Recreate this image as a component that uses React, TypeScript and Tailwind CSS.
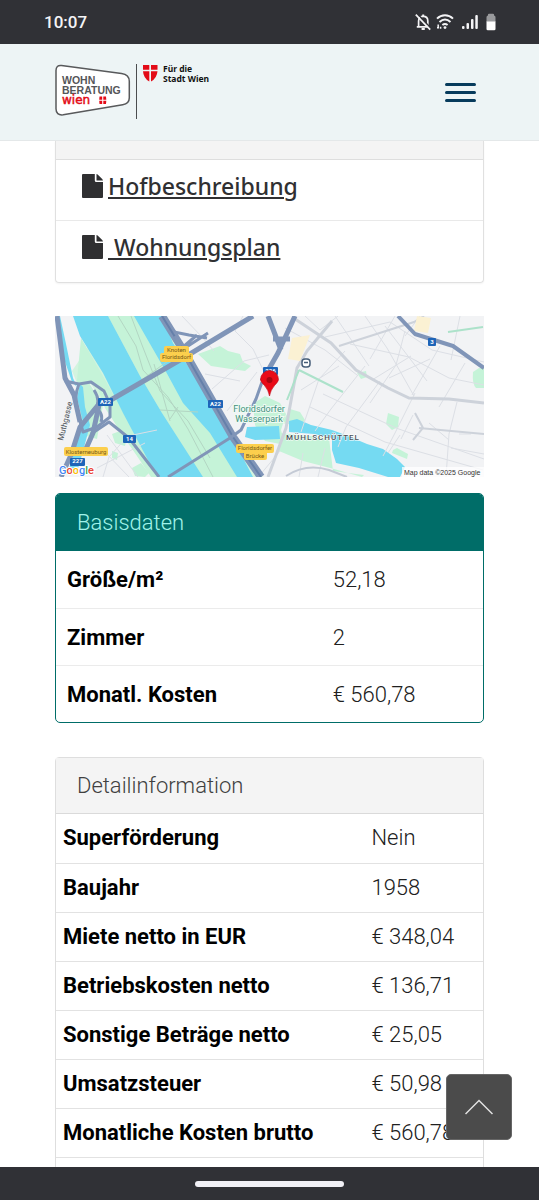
import React from 'react';

interface Row {
    label: string;
    value: string;
}

const basicRows: Row[] = [
    { label: 'Größe/m²', value: '52,18' },
    { label: 'Zimmer', value: '2' },
    { label: 'Monatl. Kosten', value: '€ 560,78' },
];

const detailRows: Row[] = [
    { label: 'Superförderung', value: 'Nein' },
    { label: 'Baujahr', value: '1958' },
    { label: 'Miete netto in EUR', value: '€ 348,04' },
    { label: 'Betriebskosten netto', value: '€ 136,71' },
    { label: 'Sonstige Beträge netto', value: '€ 25,05' },
    { label: 'Umsatzsteuer', value: '€ 50,98' },
    { label: 'Monatliche Kosten brutto', value: '€ 560,78' },
];

const StatusBar: React.FC = () => (
    <div className="h-11 shrink-0 bg-[#303136] text-[#f4f4f6] flex items-center justify-between pl-11 pr-[43px]">
        <span className="text-[17px] leading-6 font-medium">10:07</span>
        <div className="flex items-center">
            <svg className="w-4 h-[18px]" viewBox="0 0 16 18" fill="none" stroke="currentColor" strokeWidth="1.7">
                <path d="M3.6 13.5V8c0-2.8 1.9-4.600 4.600-4.600s4.600 1.800 4.600 4.600v5.500M1.800 13.800h11.600" />
                <path d="M8.200 1.400v2M6.600 16h3.200" strokeWidth="2" />
                <path d="M2.300 .8l14 15" stroke="#303136" strokeWidth="1.6" />
                <path d="M.8 1.600l14.400 15" />
            </svg>
            <svg className="w-[18px] h-[18px] ml-[5px]" viewBox="0 0 18 18" fill="none" stroke="currentColor" strokeWidth="2">
                <path d="M1 5.600c4.600-4.400 11.400-4.400 16 0M3.500 9c3.400-3 7.600-3 11 0M6.400 12c1.700-1.300 3.500-1.300 5.200 0" />
                <circle cx="9" cy="14.600" r="1.400" fill="currentColor" stroke="none" />
                <path d="M2.200 11.400v2.600M1 14.800h2M4.600 13.800v2" strokeWidth="1.5" />
            </svg>
            <svg className="w-4 h-[18px] ml-2" viewBox="0 0 16 18" fill="currentColor">
                <rect x="0" y="13" width="2.500" height="3" rx="1" />
                <rect x="4.500" y="10" width="2.500" height="6" rx="1" />
                <rect x="9" y="6" width="2.500" height="10" rx="1" />
                <rect x="13.300" y="2" width="2.500" height="14" rx="1" />
            </svg>
            <svg className="w-[10px] h-[18px] ml-2" viewBox="0 0 10 18">
                <path d="M.5 4.200Q.5 2.600 2 2.600V1.500Q2 .8 3 .8h4q1 0 1 .7v1.100q1.500 0 1.500 1.600V9H.5z" fill="#98999c" />
                <path d="M.5 8.500h9V16q0 1.300-1.300 1.300H1.800Q.5 17.300 .5 16z" fill="#fff" />
            </svg>
        </div>
    </div>
);

const BrandLogo: React.FC = () => (
    <svg className="w-40 h-14" viewBox="0 0 160 56" role="img" aria-label="Wohnberatung Wien">
        <path
            d="M6.500 2.500l60 7.900q7.800 1.100 7.800 7.800v16.600q0 5.900-6.600 6.900L8.200 51.800q-7.200 .8-7.200-6V7.500q0-5.600 5.500-5z"
            fill="#fff"
            stroke="#58595b"
            strokeWidth="1.500"
        />
        <g fontFamily="'Liberation Sans', Arial, sans-serif" fontWeight="700" fontSize="10.500" fill="#555658">
            <text x="7" y="21">WOHN</text>
            <text x="7" y="31">BERATUNG</text>
        </g>
        <text x="7" y="41" fontFamily="'DejaVu Sans', sans-serif" fontSize="12" fill="#e30b17" stroke="#e30b17" strokeWidth=".5">wien</text>
        <path d="M44.500 33.500h2.700v3.200h-3zM48.300 33.500H51l.3 3.200h-3zM44.200 37.800h3V41h-2.700zM48.300 37.800h3L51 41h-2.700z" fill="#e30b17" />
        <path d="M81.500 1v55" stroke="#4b4d4f" strokeWidth="1" />
        <path d="M88 2h6.300v4.700H88zM96 2h6.500v4.700H96zM88 8.200h6.300v10.300Q88.400 15 88 8.200zM96 8.200h6.500Q102 15 96 18.500z" fill="#e30b17" />
        <g fontFamily="'Noto Sans', sans-serif" fontWeight="700" fontSize="8.500" fill="#111">
            <text x="108" y="9">Für die</text>
            <text x="108" y="19">Stadt Wien</text>
        </g>
    </svg>
);

const FileIcon: React.FC = () => (
    <svg className="w-[21px] h-6 shrink-0" viewBox="0 0 21 24" fill="#2f2f31">
        <path d="M1 0h11.800v6.500q0 1.500 1.500 1.500H21v15q0 1-1 1H1q-1 0-1-1V1q0-1 1-1z" />
        <path d="M14.500 0q.8.200 1.400.8l4.300 4.200q.6.600.8 1.400h-6.500z" />
    </svg>
);

const MapView: React.FC = () => (
    <svg
        className="block w-full h-auto"
        viewBox="0 0 429 161"
        role="img"
        aria-label="Karte Mühlschüttel"
        fontFamily="Roboto, sans-serif"
    >
        <rect width="429" height="161" fill="#f2f3f5" />

        {/* parks and river banks */}
        <g fill="#c5f3d8">
            <path d="M48 0h64l20 42 22 34 30 50 24 35H98L66 118 50 90 32 62 24 72 17 55 34 30z" fill="#d3f4df" />
            <path d="M26 22l22 38 22 40 35 61h-9L66 116 50 92l-8-22-20-6z" />
            <path d="M22 64l12 3 14 22-6 34-14-4z" />
            <path d="M53 0h34l26 60 18 30 26 28 26 43h-36L107 97 85 60z" />
            <path d="M143 38l22-8 8 5 12 3 3 8 8 4-6 5-14-2-20-3z" />
            <path d="M198 88l12-8 15 7 6 11-5 16 4 15-20-4-10-16z" />
            <path d="M224 117l50 5 4 33 31 4-2 2-28-8-31-8-24-10z" />
            <path d="M235 93l10 3 5 8-5 6-18-3z" />
            <path d="M418 56l6-4h5v20h-8q-4-4-3-16z" />
            <path d="M333 97l11 4-1 10-6 3-6-6zM302 57l9-2 1 6-6 2zM338 134l4-2 11 6-1 5-15-6z" />
            <path d="M57 118l8-3 7 6-2 9-10-3zM77 152l9-5 8 10-4 4-10-1zM57 135l6 2-1 7-5-2z" />
        </g>

        {/* water */}
        <g fill="#75daf2">
            <path d="M18 0h35l32 60 22 37 41 64h-46L68 97 48 57 25 20z" />
            <path d="M79 0h28l11 27 24 37 33 53 23 44h-16l-27-44-27-30-18-33z" />
            <path d="M192 111l32-1 1 13-25 1-10-3z" />
            <path d="M234 105l8-2 14 6 21 5 16 6 19 8 16 5 14 10 8 8-5 10h-12l-29-9-23-5-4-13v-12l-18-4-25-2z" />
            <path d="M5 0l6 28 7 34 4 9-5-5L8 40 3 0z" />
            <path d="M25 68l3 3 2 20 5 18-8 30-5 17h-9l9-30 6-20-6-24z" />
        </g>

        {/* minor streets */}
        <g fill="none" stroke="#dcdfe5" strokeWidth="1">
            <path d="M127 0l20 21 12 14M188 0l-8 15 18 18 17 35M157 73l32-28 25-6M172 95l30-39M150 58l35 7" />
            <path d="M230 12l40 22 32 25M250 0l15 14 18-14M290 35l-26 28-18 53M310 50l-34 43-16 22M325 65l-34 46-8 20M360 77l-20 40-12 23M402 86l-8 32-3 43M268 78l73 34 88 31M255 91l75 35 98 28M295 28l59 13 40 21 35 7M350 15l-9 34-26 38M385 30l-28 49M410 47l-26 44M270 21l65-15 42 28 52 12M310 0l22 32 27 48M340 0l-25 43M365 0l-15 20M405 0l-9 44M375 43l-41 19M356 40l-39 24M284 50l-38 24M330 10l42 55M280 0l34 50" />
            <path d="M48 161l6-20 19-21 29-6M52 119l31 42M42 152l48-25M48 134l26 27M225 135l-20 24M248 137l-4 24M270 132l-7 29" />
            <path d="M404 118h12M396 132l33 6M345 119l-12 18M358 99l-12 24M374 107l20 17" />
        </g>
        <g fill="none" stroke="#b3d6c3" strokeWidth="1">
            <path d="M63 0l18 30 7 24 25 27 20 32 25 48M76 0l11 29 18 46 28 30 22 37M85 65l28-20M105 94l38 2M99 48l16 57M123 91l-8 12" />
        </g>
        <g fill="none" stroke="#cdd2da" strokeWidth="3">
            <path d="M277 5L252 35 242 52 231 112 220 142 213 161" />
            <path d="M240 3l36 24 25 27 32 18 21 10 40 1 35 4" />
            <path d="M284 30l75-24 10-6M364 112l65 6M360 97l8 15-10 12" strokeWidth="2" />
            <path d="M244 54l44 22M244 54l-12 30M393 16l35-5" stroke="#ace2ca" strokeWidth="2" />
        </g>
        <path d="M362 0l14 2-3 15-14-2zM237 22l18-3-10 26-12-2z" fill="#fbf1d3" />

        {/* highways */}
        <g fill="none" stroke="#8095b8" strokeLinejoin="round">
            <path d="M2 0l8 62 9 17 6 27" strokeWidth="5" />
            <path d="M6 161l10-22 9-28 19-23L54 85 125 44 198 0" strokeWidth="5" />
            <path d="M10 65l14 3 12-2 13 9 5 11M24 68q-6 14-1 30l5 18 14-5 13-10 0-16M39 74q8 12 0 22M39 92q10 4 7 14" strokeWidth="3" />
            <path d="M30 135l8-18 6-28" strokeWidth="5" />
            <path d="M36 118l18-12 20 16 30 39" strokeWidth="3" />
            <path d="M107 0l23 37 48 84 28 40" strokeWidth="8" />
            <path d="M107 0l23 37 48 84 28 40" stroke="#6580aa" strokeWidth="2" />
            <path d="M119 16l15 3 18 3M120 20l10 20M153 17l-20 13-10 4M128 31l14-12" strokeWidth="3" />
            <path d="M113 161l62-39 11-8 15-31 6-17" strokeWidth="3" />
            <path d="M213 0l13 34M240 0l-17 37-16 28M218 23h17" strokeWidth="5" />
            <path d="M343 0l17 18 38 12 31 22" strokeWidth="4" />
            <path d="M231 160q20-13 43-6l18 7" stroke="#c4cad5" strokeWidth="2" />
        </g>

        {/* road shields */}
        <g fill="#1d64b8">
            <rect x="43" y="82" width="15" height="8" rx="1" />
            <rect x="153" y="84" width="15" height="8" rx="1" />
            <rect x="68" y="119" width="13" height="8" rx="1" />
            <rect x="15" y="142" width="15" height="8" rx="1" />
            <rect x="208" y="51" width="15" height="8" rx="1" />
            <rect x="373" y="22" width="8" height="8" rx="1" />
        </g>
        <g fill="#fff" fontSize="6" fontWeight="700" textAnchor="middle">
            <text x="50.500" y="88">A22</text>
            <text x="160.500" y="90">A22</text>
            <text x="74.500" y="125">14</text>
            <text x="22.500" y="147">227</text>
            <text x="215.500" y="57">226</text>
            <text x="377" y="28">3</text>
        </g>
        <g fill="#fccf4d">
            <rect x="109" y="30" width="25" height="9" rx="2" />
            <rect x="105" y="37" width="33" height="9" rx="2" />
            <rect x="9" y="131" width="44" height="9" rx="2" />
            <rect x="181" y="128" width="38" height="9" rx="2" />
            <rect x="189" y="135" width="23" height="9" rx="2" />
        </g>
        <g fill="#765817" fontSize="6" textAnchor="middle">
            <text x="121.500" y="36">Knoten</text>
            <text x="121.500" y="43">Floridsdorf</text>
            <text x="31" y="138">Klosterneuburg</text>
            <text x="200" y="134">Floridsdorfer</text>
            <text x="200" y="142">Brücke</text>
        </g>

        {/* place names */}
        <g fill="#43917d" fontSize="9" textAnchor="middle" stroke="#eefaf3" strokeWidth="2" paintOrder="stroke">
            <text x="204" y="96">Floridsdorfer</text>
            <text x="204" y="106">Wasserpark</text>
        </g>
        <text x="231" y="124" fill="#4b5158" fontSize="8" fontWeight="500" letterSpacing="1" stroke="#fff" strokeWidth="1" paintOrder="stroke">MÜHLSCHÜTTEL</text>
        <text transform="translate(8 125) rotate(-76)" fill="#4b5158" fontSize="8">Muthgasse</text>

        <rect x="247" y="43" width="8" height="8" rx="3" fill="#fff" stroke="#465d78" strokeWidth="1.500" />
        <path d="M249 46.500h4" fill="none" stroke="#465d78" strokeWidth="1.500" />

        <path d="M214.500 80q-1-6-5-10.500-4-4-4-6a9 9 0 0 1 18 0q0 2-4 6-4 4.500-5 10.500z" fill="#e90b18" stroke="#bd0713" strokeWidth=".6" />
        <circle cx="214.500" cy="64" r="3" fill="#a70711" />

        <g fontSize="11" fontWeight="500" stroke="#fff" strokeWidth="2" paintOrder="stroke">
            <text x="4" y="158">
                <tspan fill="#4285f4">G</tspan>
                <tspan fill="#ea4335">o</tspan>
                <tspan fill="#fbbc05">o</tspan>
                <tspan fill="#4285f4">g</tspan>
                <tspan fill="#34a853">l</tspan>
                <tspan fill="#ea4335">e</tspan>
            </text>
        </g>
        <rect x="347" y="151" width="82" height="10" fill="#fff" fillOpacity=".75" />
        <text x="349" y="158.500" fill="#333" fontSize="7" fontFamily="'Liberation Sans', Arial, sans-serif">Map data ©2025 Google</text>
    </svg>
);

const App: React.FC = () => {
    return (
        <div className="h-screen flex flex-col overflow-hidden bg-white font-[Roboto,sans-serif] text-black">
            <StatusBar />
            <header className="h-[97px] shrink-0 bg-[#edf4f5] flex items-start justify-between pl-[55px] pr-[63px] pt-[19px] border-b border-[#e4e8e9]">
                <a href="#start">
                    <BrandLogo />
                </a>
                <button type="button" aria-label="Menü" className="mt-5 flex flex-col gap-[5px]">
                    <span className="block w-[31px] h-[3px] rounded-sm bg-[#073b5c]" />
                    <span className="block w-[31px] h-[3px] rounded-sm bg-[#073b5c]" />
                    <span className="block w-[31px] h-[3px] rounded-sm bg-[#073b5c]" />
                </button>
            </header>

            <div className="relative flex-1 min-h-0">
                <main className="h-full overflow-hidden px-[55px]">
                    <section className="border-x border-b border-[#e0e0e0] rounded-b shadow-xs">
                        <div className="h-[19px] bg-[#f4f4f4] border-b border-[#dedede]" />
                        <ul className="font-['Noto_Sans',sans-serif] text-[23px] leading-8 font-medium text-[#303032]">
                            <li className="h-[61px] pl-[26px] pt-[10px] border-b border-[#e9e9e9]">
                                <a href="#hofbeschreibung" className="inline-flex items-center gap-[5px]">
                                    <FileIcon />
                                    <span className="underline underline-offset-2 decoration-2">Hofbeschreibung</span>
                                </a>
                            </li>
                            <li className="h-[61px] pl-[26px] pt-[10px]">
                                <a href="#wohnungsplan" className="inline-flex items-center gap-[5px]">
                                    <FileIcon />
                                    <span className="whitespace-pre underline underline-offset-2 decoration-2"> Wohnungsplan</span>
                                </a>
                            </li>
                        </ul>
                    </section>

                    <div className="mt-[33px]">
                        <MapView />
                    </div>

                    <section className="mt-4 border border-[#006d68] rounded-[5px] overflow-hidden">
                        <h2 className="h-[57px] pl-[21px] flex items-center bg-[#006d68] text-[#a0f3ea] text-[22px] leading-7 font-light">
                            Basisdaten
                        </h2>
                        <table className="w-full table-fixed text-[22px] leading-7">
                            <tbody>
                                {basicRows.map(row => (
                                    <tr key={row.label} className="h-[57px] border-b border-[#ebebeb] last:border-b-0">
                                        <th scope="row" className="w-[62%] pl-[11px] pt-0.5 text-left font-bold">{row.label}</th>
                                        <td className="pl-3 pt-0.5 font-light text-[#202020]">{row.value}</td>
                                    </tr>
                                ))}
                            </tbody>
                        </table>
                    </section>

                    <section className="mt-[34px] border border-[#dedede] rounded-t">
                        <h2 className="h-14 pl-[21px] flex items-center bg-[#f4f4f4] border-b border-[#dadada] text-[#404040] text-[22px] leading-7 font-light">
                            Detailinformation
                        </h2>
                        <table className="w-full table-fixed text-[22px] leading-7">
                            <tbody>
                                {detailRows.map(row => (
                                    <tr key={row.label} className="h-[49px] border-b border-[#e2e2e2]">
                                        <th scope="row" className="w-[72%] pl-[7px] text-left font-bold">{row.label}</th>
                                        <td className="pl-2 font-light text-[#202020] whitespace-nowrap">{row.value}</td>
                                    </tr>
                                ))}
                                <tr className="h-[49px]">
                                    <td colSpan={2} />
                                </tr>
                            </tbody>
                        </table>
                    </section>
                </main>

                <button
                    type="button"
                    aria-label="Nach oben"
                    className="absolute right-[27px] bottom-[27px] size-[66px] rounded-[5px] bg-[#4b4b4b] border border-[#666] flex items-center justify-center"
                >
                    <svg className="w-7 h-4" viewBox="0 0 28 16" fill="none" stroke="#e2e2e2" strokeWidth="1.500">
                        <path d="M.5 15L14 1.500 27.500 15" />
                    </svg>
                </button>
            </div>

            <div className="h-[33px] shrink-0 bg-[#303136] flex items-center justify-center">
                <span className="block w-[149px] h-1.5 rounded-full bg-[#f1f0f6]" />
            </div>
        </div>
    );
};

export default App;
